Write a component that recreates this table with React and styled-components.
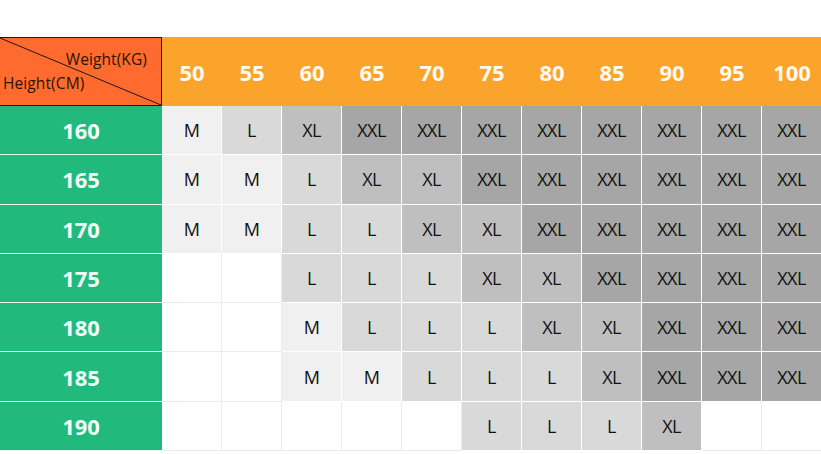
import React from 'react'
import styled, { createGlobalStyle } from 'styled-components'

const GlobalStyle = createGlobalStyle`
  html, body {
    margin: 0;
    padding: 0;
    background: #ffffff;
    overflow: hidden;
  }
  body {
    font-family: 'Open Sans', 'Noto Sans', sans-serif;
  }
`

const weights = [50, 55, 60, 65, 70, 75, 80, 85, 90, 95, 100]

const chart = [
  { height: 160, sizes: ['M', 'L', 'XL', 'XXL', 'XXL', 'XXL', 'XXL', 'XXL', 'XXL', 'XXL', 'XXL'] },
  { height: 165, sizes: ['M', 'M', 'L', 'XL', 'XL', 'XXL', 'XXL', 'XXL', 'XXL', 'XXL', 'XXL'] },
  { height: 170, sizes: ['M', 'M', 'L', 'L', 'XL', 'XL', 'XXL', 'XXL', 'XXL', 'XXL', 'XXL'] },
  { height: 175, sizes: ['', '', 'L', 'L', 'L', 'XL', 'XL', 'XXL', 'XXL', 'XXL', 'XXL'] },
  { height: 180, sizes: ['', '', 'M', 'L', 'L', 'L', 'XL', 'XL', 'XXL', 'XXL', 'XXL'] },
  { height: 185, sizes: ['', '', 'M', 'M', 'L', 'L', 'L', 'XL', 'XXL', 'XXL', 'XXL'] },
  { height: 190, sizes: ['', '', '', '', '', 'L', 'L', 'L', 'XL', '', ''] },
]

const fills = {
  M: '#f0f0f0',
  L: '#d9d9d9',
  XL: '#bfbfbf',
  XXL: '#a6a6a6',
}

const Page = styled.div`
  padding-top: 37px;
  width: 821px;
  overflow: hidden;
`

const Table = styled.div`
  display: grid;
  grid-template-columns: 162px repeat(11, 60px);
  grid-template-rows: 69px repeat(7, 49.3px);
  width: 822px;
`

const Corner = styled.div`
  position: relative;
  background: #ff6b2e;
  border: 1px solid #1a1a1a;
  border-left: none;
  box-sizing: border-box;
  display: flex;
  flex-direction: column;
  justify-content: center;
  padding: 4px 14px 6px 3px;
  gap: 2px;
  font-size: 15.5px;
  color: #2a1405;
  line-height: 22px;
  letter-spacing: 0.1px;

  svg {
    position: absolute;
    inset: 0;
    width: 100%;
    height: 100%;
  }
`

const CornerLabel = styled.span`
  position: relative;
  align-self: ${p => (p.$end ? 'flex-end' : 'flex-start')};
`

const WeightCell = styled.div`
  background: #fba42b;
  color: #fffaf0;
  font-weight: 700;
  font-size: 22px;
  display: flex;
  align-items: center;
  justify-content: center;
`

const HeightCell = styled.div`
  background: #22ba7c;
  color: #f2fff8;
  font-weight: 700;
  font-size: 22px;
  display: flex;
  align-items: center;
  justify-content: center;
  border-bottom: 1px solid #e9f7f0;
  box-sizing: border-box;
`

const SizeCell = styled.div`
  background: ${p => fills[p.$size] || '#ffffff'};
  border-right: 1px solid ${p => (p.$size ? '#ffffff' : '#ebebeb')};
  border-bottom: 1px solid ${p => (p.$size ? '#ffffff' : '#ebebeb')};
  box-sizing: border-box;
  color: #111111;
  font-size: 18px;
  display: flex;
  align-items: center;
  justify-content: center;
  letter-spacing: -0.6px;
`

const App = () => {
  return (
    <Page>
      <GlobalStyle />
      <Table>
        <Corner>
          <svg viewBox="0 0 100 100" preserveAspectRatio="none">
            <line x1="0" y1="0" x2="100" y2="100" stroke="#1a1a1a" strokeWidth="1" vectorEffect="non-scaling-stroke" />
          </svg>
          <CornerLabel $end>Weight(KG)</CornerLabel>
          <CornerLabel>Height(CM)</CornerLabel>
        </Corner>
        {weights.map(w => (
          <WeightCell key={w}>{w}</WeightCell>
        ))}
        {chart.map(row => (
          <React.Fragment key={row.height}>
            <HeightCell>{row.height}</HeightCell>
            {row.sizes.map((s, i) => (
              <SizeCell key={i} $size={s}>{s}</SizeCell>
            ))}
          </React.Fragment>
        ))}
      </Table>
    </Page>
  )
}

export default App
